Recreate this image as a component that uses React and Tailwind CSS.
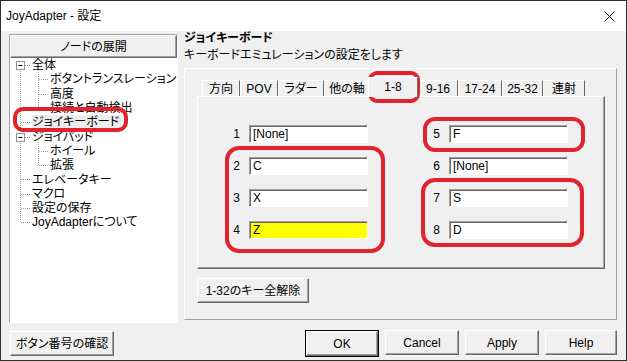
const tree = [
  { text: "全体", level: 0, box: true },
  { text: "ボタントランスレーション", level: 1 },
  { text: "高度", level: 1 },
  { text: "接続と自動検出", level: 1 },
  { text: "ジョイキーボード", level: 0, selected: true },
  { text: "ジョイパッド", level: 0, box: true },
  { text: "ホイール", level: 1 },
  { text: "拡張", level: 1 },
  { text: "エレベータキー", level: 0 },
  { text: "マクロ", level: 0 },
  { text: "設定の保存", level: 0 },
  { text: "JoyAdapterについて", level: 0 },
];

const tabs = [
  { label: "方向", w: "w-[38px]" },
  { label: "POV", w: "w-[38px]" },
  { label: "ラダー", w: "w-[46px]" },
  { label: "他の軸", w: "w-[46px]" },
  { label: "1-8", w: "w-[50px]", active: true },
  { label: "9-16", w: "w-[40px]" },
  { label: "17-24", w: "w-[44px]" },
  { label: "25-32", w: "w-[41px]" },
  { label: "連射", w: "w-[42px]" },
];

const keys = [
  ["1", "[None]"],
  ["5", "F"],
  ["2", "C"],
  ["6", "[None]"],
  ["3", "X"],
  ["7", "S"],
  ["4", "Z", true],
  ["8", "D"],
];

const raised =
  "border border-t-white border-l-white border-r-[#696969] border-b-[#696969] shadow-[inset_-1px_-1px_#a0a0a0]";

// row pitch in the tree
const ROW = 14.3;

function TreeLines() {
  const cy = (i) => Math.round(7 + ROW * i);
  const dot = { stroke: "#a0a0a0", strokeWidth: 1, strokeDasharray: "1 1" };
  const rootRows = [0, 4, 5, 8, 9, 10, 11];
  const childRows = [1, 2, 3, 6, 7];
  return (
    <svg className="pointer-events-none absolute left-0 top-0" width="166" height="264">
      <line x1="10.5" y1={cy(0)} x2="10.5" y2={cy(11) + 1} {...dot} />
      <line x1="28.5" y1={cy(0) + 5} x2="28.5" y2={cy(3) + 1} {...dot} />
      <line x1="28.5" y1={cy(5) + 5} x2="28.5" y2={cy(7) + 1} {...dot} />
      {rootRows.map((i) => (
        <line key={i} x1="11" y1={cy(i) + 0.5} x2="20" y2={cy(i) + 0.5} {...dot} />
      ))}
      {childRows.map((i) => (
        <line key={i} x1="29" y1={cy(i) + 0.5} x2="38" y2={cy(i) + 0.5} {...dot} />
      ))}
      {[0, 5].map((i) => (
        <g key={i}>
          <rect x="6.5" y={cy(i) - 3.5} width="8" height="8" fill="white" stroke="#919191" />
          <line x1="8.5" y1={cy(i) + 0.5} x2="12.5" y2={cy(i) + 0.5} stroke="black" />
        </g>
      ))}
    </svg>
  );
}

function Button({ children, className = "" }) {
  return (
    <div className={`flex h-[25px] items-center justify-center bg-[#f0f0f0] ${className}`}>
      {children}
    </div>
  );
}

export default function App() {
  return (
    <div className="relative flex h-[361px] w-[627px] flex-col overflow-hidden border border-[#2d2d2d] bg-[#f0f0f0] font-['Liberation_Sans','Noto_Sans_CJK_JP',sans-serif] text-[12px] leading-[14px] text-black [font-feature-settings:'palt']">
      <div className="flex h-[30px] items-center justify-between bg-white pl-[5px] pr-[11px]">
        <span className="text-[12px]">JoyAdapter - 設定</span>
        <svg width="11" height="11" viewBox="0 0 11 11">
          <path d="M0.5 0.5 L10.5 10.5 M10.5 0.5 L0.5 10.5" stroke="#111" strokeWidth="1" />
        </svg>
      </div>

      <div className="flex flex-1 flex-col px-[8px]">
        <div className="flex h-[292px] items-start">
          <div className="mt-[3px] flex h-[289px] w-[169px] flex-col border border-t-[#a0a0a0] border-l-[#a0a0a0] border-r-white border-b-white">
            <div className={`flex h-[23px] shrink-0 items-center justify-center ${raised}`}>ノードの展開</div>
            <div className="relative flex-1 bg-white">
              <TreeLines />
              {tree.map((row) => (
                <div
                  key={row.text}
                  className={`flex h-[14.3px] items-center whitespace-nowrap ${row.level ? "pl-[40px]" : "pl-[22px]"}`}
                >
                  <span className={row.selected ? "bg-[#ececec] pr-[2px]" : ""}>{row.text}</span>
                </div>
              ))}
            </div>
          </div>

          <div className="ml-[6px] flex w-[433px] flex-col">
            <div className="font-bold">ジョイキーボード</div>
            <div className="mt-[3px]">キーボードエミュレーションの設定をします</div>
            <div className="mt-[6px] flex h-[252px] flex-col border border-t-white border-l-white border-r-[#a0a0a0] border-b-[#a0a0a0] pl-[12px] pr-[11px] pt-[9px]">
              <div className="flex h-[18px] items-end pl-[5px]">
                {tabs.map((t) =>
                  t.active ? (
                    <div
                      key={t.label}
                      className={`relative z-10 -mb-[1px] -ml-[2px] flex h-[20px] items-center justify-center border-l border-t border-r border-l-white border-t-white border-r-[#696969] bg-[#f0f0f0] pb-[2px] ${t.w}`}
                    >
                      {t.label}
                    </div>
                  ) : (
                    <div
                      key={t.label}
                      className={`flex h-[16px] items-center justify-center border-l border-t border-r border-l-white border-t-white border-r-[#696969] ${t.w}`}
                    >
                      {t.label}
                    </div>
                  )
                )}
              </div>
              <div className={`h-[173px] w-[408px] pl-[25px] pt-[28px] ${raised}`}>
                <div className="grid grid-cols-[145px_145px] gap-x-[55px] gap-y-[14px]">
                  {keys.map(([n, v, yellow]) => (
                    <div key={n} className="flex items-center">
                      <span className="w-[17px] text-right">{n}</span>
                      <div
                        className={`ml-[9px] flex h-[18px] w-[119px] items-center border border-t-[#a0a0a0] border-l-[#a0a0a0] border-r-white border-b-white pl-[3px] shadow-[inset_1px_1px_#696969] ${yellow ? "bg-[#ffff00]" : "bg-white"}`}
                      >
                        {v}
                      </div>
                    </div>
                  ))}
                </div>
              </div>
              <Button className={`mt-[9px] w-[112px] ${raised}`}>1-32のキー全解除</Button>
            </div>
          </div>
        </div>

        <div className="mt-[7px] flex items-center">
          <Button className={`ml-[1px] w-[104px] ${raised}`}>ボタン番号の確認</Button>
          <div className="ml-auto mr-[1px] flex gap-[6px]">
            <div className="border border-black">
              <Button className={`h-[23px] w-[72px] ${raised}`}>OK</Button>
            </div>
            <Button className={`w-[74px] ${raised}`}>Cancel</Button>
            <Button className={`w-[74px] ${raised}`}>Apply</Button>
            <Button className={`w-[72px] ${raised}`}>Help</Button>
          </div>
        </div>
      </div>

      <div className="pointer-events-none absolute left-[12px] top-[106px] h-[25px] w-[115px] rounded-[10px] border-[4px] border-[#e0232c]" />
      <div className="pointer-events-none absolute left-[367px] top-[70px] h-[32px] w-[52px] rounded-[9px] border-[4px] border-[#e0232c]" />
      <div className="pointer-events-none absolute left-[224px] top-[145px] h-[107px] w-[160px] rounded-[14px] border-[4px] border-[#e0232c]" />
      <div className="pointer-events-none absolute left-[422px] top-[116px] h-[35px] w-[162px] rounded-[12px] border-[4px] border-[#e0232c]" />
      <div className="pointer-events-none absolute left-[420px] top-[177px] h-[69px] w-[163px] rounded-[14px] border-[4px] border-[#e0232c]" />
    </div>
  );
}
